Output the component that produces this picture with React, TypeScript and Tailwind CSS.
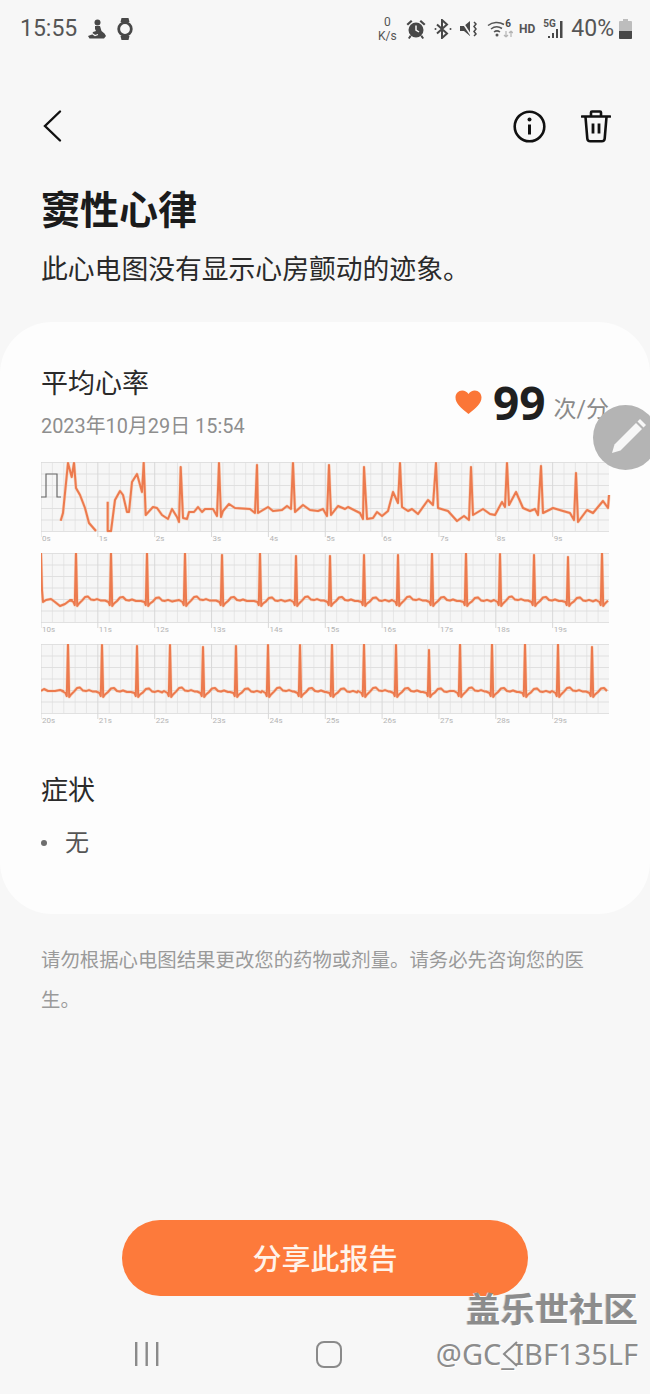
const GRID = 11.37;
const LEFT = 41;
const RIGHT = 609;

type Beat = [number, number];

// first strip is traced by hand, the first seconds are noisy
const strip1a = '60.7,520.7 63,513 68,463 71.7,477 74,463 76,488 80,495 85,508 89,523 96,531';
const strip1b =
  '107.7,501.7 107.7,531 111,531 115,500 120,491 123,495 127,512 129,512 132,482 137,474 142,492 143.7,462.7 145.7,515 153,507 157,508 162,515 168,519 172,509 177,517 179,522 180.7,467 183,518 187,519 189,512 194,512 198,507 202,512 205,509 213,509 217,516 219,463 221,517 223,511 229,504 235,508 250,509 255,513 257,465 258,513 268,507 273,511 282,510 287,506 291,509 293,463 295,512 303,505 310,510 318,511 323,509 327,516 329,465 331,515 338,506 345,509 348,507 360,513 363,519 364,467 367,519 373,518 377,512 382,516 388,511 393,492 398,503 400,463 402,507 408,511 412,509 418,514 428,500 433,505 436,463 438,508 448,511 457,521 464,516 469,520 471,467 473,515 483,509 490,514 495,515 502,502 505,507 507,463 509,505 516,492 523,508 530,511 535,509 538,515 541,466 543,513 553,508 563,511 570,513 574,520 576,473 578,522 587,510 593,513 603,501 608,508 609,495';

const beats2: Beat[] = [
  [76, 553], [111, 553], [147, 553], [185, 553], [222, 555], [260, 553], [296, 556], [330, 556], [364, 555],
  [398, 555], [432, 553], [466, 553], [500, 554], [534, 555], [568, 557], [602, 553],
];
const beats3: Beat[] = [
  [68, 644], [102, 645], [137, 646], [170, 645], [203, 647], [236, 646], [268, 645], [300, 645], [332, 644],
  [364, 644], [396, 645], [429, 650], [460, 644], [492, 644], [525, 644], [558, 644], [592, 647],
];

// builds one trace from beat positions: dip, spike, then the T wave
function tracePoints(beats: Beat[], base: number, start: string) {
  const pts: string[] = [start];
  beats.forEach(([x, peak], i) => {
    const next = beats[i + 1]?.[0] ?? RIGHT + 8;
    const wob = (i * 7) % 3;
    pts.push(`${x - 6},${base + wob * 0.5}`, `${x - 2.5},${base + 2}`, `${x - 1.2},${base + 5}`);
    pts.push(`${x},${peak}`, `${x + 1.2},${base + 6}`, `${x + 3},${base + 3.5}`);
    const tail: [number, number][] = [
      [6, 1], [9, -2.5], [12, -3], [15, 0], [18, 0.5], [21, -0.5], [25, 1],
    ];
    tail.forEach(([dx, dy]) => {
      if (x + dx < next - 6 && x + dx < RIGHT) pts.push(`${x + dx},${base + dy + (wob - 1) * 0.4}`);
    });
  });
  return pts.join(' ');
}

function Strip({ top, from, traces, pulse }: { top: number; from: number; traces: string[]; pulse?: string }) {
  const h = [...Array(7).keys()].map((i) => top + 0.5 + (i * 69) / 6);
  const v = [...Array(51).keys()].map((i) => LEFT + i * GRID);
  return (
    <svg width="570" height="84" viewBox={`41 ${top} 570 84`} className="block">
      <rect x={LEFT} y={top} width={RIGHT - LEFT} height="69" fill="#f6f6f6" />
      {v.map((x, i) =>
        i % 5 === 0 ? null : <line key={i} x1={x} x2={x} y1={top} y2={top + 69} stroke="#e2e2e2" strokeWidth="0.8" />
      )}
      {h.map((y) => (
        <line key={y} x1={LEFT} x2={RIGHT} y1={y} y2={y} stroke="#dedede" strokeWidth="0.9" />
      ))}
      {[...Array(10).keys()].map((i) => {
        const x = LEFT + i * GRID * 5;
        return (
          <g key={i}>
            <line x1={x} x2={x} y1={top} y2={top + 75} stroke="#d8d8d8" strokeWidth="1" />
            <text x={x + 1} y={top + 79} fontSize="8" fill="#b4b4b4" fontFamily="Roboto, sans-serif">
              {from + i}s
            </text>
          </g>
        );
      })}
      {pulse && <polyline points={pulse} fill="none" stroke="#6b6b6b" strokeWidth="1.2" />}
      {traces.map((p, i) => (
        <g key={i} fill="none" strokeLinejoin="round">
          <polyline points={p} stroke="#f9c3a4" strokeWidth="3.2" opacity="0.6" />
          <polyline points={p} stroke="#ec7a4e" strokeWidth="2" />
        </g>
      ))}
    </svg>
  );
}

function StatusLeft() {
  return (
    <div className="flex items-center gap-[11px]">
      <span className="pt-[1px] text-[23px] text-[#555]">15:55</span>
      <svg width="18" height="20" viewBox="0 0 18 20" fill="#484848">
        <circle cx="9.500" cy="3.500" r="3" />
        <path d="M7 7h5l1.500 5 3 2.500L18 17l-2 2.500H1.500L0 17l4-1.500 1-2.500 3-1-1-2z" />
        <path d="M4 14.500l3 2 3-1" stroke="#f7f7f7" strokeWidth="1.200" fill="none" />
      </svg>
      <svg width="16" height="24" viewBox="0 0 16 24" fill="none">
        <path d="M3.500 5L4.500 1h7l1 4M3.500 19l1 4h7l1-4" fill="#484848" />
        <circle cx="8" cy="12" r="6.300" stroke="#484848" strokeWidth="2.800" />
      </svg>
    </div>
  );
}

function StatusRight() {
  return (
    <div className="flex items-center">
      <div className="flex w-[20px] flex-col items-center text-[12px] leading-[14px] text-[#555]">
        <span>0</span>
        <span>K/s</span>
      </div>
      <svg className="ml-[9px]" width="20" height="20" viewBox="0 0 20 20" fill="#484848">
        <circle cx="10" cy="11" r="7.500" />
        <path d="M0.500 5L5 1l1.500 1.500L2 6.500zM19.500 5L15 1l-1.500 1.500L18 6.500zM4 16l-2 3 1.500 1 2-2.500zM16 16l2 3-1.500 1-2-2.500z" />
        <path d="M10 6.500V11l3 2" stroke="#f7f7f7" strokeWidth="1.500" fill="none" />
      </svg>
      <svg className="ml-[8px]" width="18" height="20" viewBox="0 0 18 20" fill="none" stroke="#484848" strokeWidth="2">
        <path d="M3 5.500l10 9-5 4.500V1l5 4.500-10 9" />
        <circle cx="1.500" cy="10" r="1" fill="#484848" stroke="none" />
        <circle cx="16.500" cy="10" r="1" fill="#484848" stroke="none" />
      </svg>
      <svg className="ml-[8px]" width="19" height="20" viewBox="0 0 19 20" fill="#484848">
        <path d="M0 7h4l6-5v15l-6-5H0z" />
        <path d="M1 1l11 17" stroke="#f7f7f7" strokeWidth="1.500" />
        <path d="M14 3l2 2-2 2.500 2 2.500-2 2.500 2 2.500-2 2" stroke="#484848" strokeWidth="1.500" fill="none" />
      </svg>
      <svg className="ml-[8px]" width="26" height="20" viewBox="0 0 26 20" fill="none">
        <path d="M1 6.500a14 14 0 0 1 16-1M4 10a9.500 9.500 0 0 1 11-.5M7 13a5 5 0 0 1 6 0" stroke="#555" strokeWidth="1.500" />
        <circle cx="10" cy="16" r="1.500" fill="#555" />
        <path d="M19 12v6m0 0l-2-2m2 2l2-2" stroke="#b5b5b5" strokeWidth="1.200" />
        <path d="M24 18v-6m0 0l-2 2m2-2l2 2" stroke="#b5b5b5" strokeWidth="1.200" />
      </svg>
      <span className="ml-[-8px] mt-[-10px] text-[10px] font-bold leading-none text-[#484848]">6</span>
      <span className="ml-[8px] text-[12px] font-bold text-[#555]">HD</span>
      <div className="relative ml-[8px] h-[20px] w-[23px]">
        <span className="absolute left-0 top-0 text-[10px] font-bold leading-none text-[#555]">5G</span>
        <svg className="absolute left-0 top-0" width="23" height="20" viewBox="0 0 23 20" fill="#484848">
          <rect x="5" y="17" width="2" height="2" />
          <rect x="9" y="14" width="2" height="5" />
          <rect x="13" y="10" width="2" height="9" />
          <rect x="17" y="2" width="2.500" height="17" />
        </svg>
      </div>
      <span className="ml-[5px] pt-[1px] text-[23px] text-[#555]">40%</span>
      <svg className="ml-[5px]" width="13" height="20" viewBox="0 0 13 20">
        <path d="M4 0h5v2h3a1 1 0 0 1 1 1v16a1 1 0 0 1-1 1H1a1 1 0 0 1-1-1V3a1 1 0 0 1 1-1h3z" fill="#bdbdbd" />
        <path d="M0 12h13v7a1 1 0 0 1-1 1H1a1 1 0 0 1-1-1z" fill="#484848" />
      </svg>
    </div>
  );
}

export default function App() {
  return (
    <div className="relative flex h-[1394px] w-[650px] flex-col overflow-hidden bg-[#f7f7f7] [font-family:Roboto,'Noto_Sans_CJK_SC',sans-serif]">
      <div className="flex h-[58px] items-center justify-between pl-[20px] pr-[18px]">
        <StatusLeft />
        <StatusRight />
      </div>

      <div className="mt-[42px] flex h-[52px] items-center justify-between pl-[40px] pr-[39px]">
        <svg width="24" height="36" viewBox="0 0 24 36" fill="none" stroke="#111" strokeWidth="2.400" strokeLinecap="round">
          <path d="M20 3.500L5 18l15 14.500" />
        </svg>
        <div className="flex items-center gap-[35px]">
          <svg width="33" height="33" viewBox="0 0 33 33" fill="none" stroke="#111" strokeWidth="2.600">
            <circle cx="16.500" cy="16.500" r="14.800" />
            <path d="M16.500 14.500v10" strokeWidth="3" />
            <circle cx="16.500" cy="9.500" r="2" fill="#111" stroke="none" />
          </svg>
          <svg width="30" height="33" viewBox="0 0 30 33" fill="none" stroke="#111" strokeWidth="2.600" strokeLinejoin="round">
            <path d="M1 6.500h28" strokeLinecap="round" />
            <path d="M10 6V2.500a1 1 0 0 1 1-1h8a1 1 0 0 1 1 1V6" />
            <path d="M4.500 7l1.800 21.500a3 3 0 0 0 3 2.800h11.400a3 3 0 0 0 3-2.800L25.500 7" />
            <path d="M12 13.500v10M18 13.500v10" strokeWidth="2.800" />
          </svg>
        </div>
      </div>

      <h1 className="mt-[34px] pl-[41px] text-[39px] font-bold leading-[50px] text-[#1b1b1b]">窦性心律</h1>
      <p className="mt-[14px] pl-[41px] text-[26.800px] leading-[40px] text-[#2a2a2a]">此心电图没有显示心房颤动的迹象。</p>

      <section className="mt-[32px] rounded-[52px] bg-[#fdfdfd] pb-[53px] pl-[41px] pt-[44px]">
        <div className="flex h-[96px] items-start justify-between pr-[41px]">
          <div>
            <div className="text-[27px] leading-[36px] text-[#2a2a2a]">平均心率</div>
            <div className="mt-[11px] text-[19.900px] leading-[28px] text-[#8e8e8e]">2023年10月29日 15:54</div>
          </div>
          <div className="mt-[7px] flex items-center">
            <svg width="27" height="25" viewBox="0 0 27 25" fill="#fb7637">
              <path d="M13.500 24C6 18 .5 13.500.5 7.500.5 3.500 3.500.5 7.200.5c2.600 0 4.800 1.200 6.300 3.600C15 1.700 17.200.5 19.800.5c3.700 0 6.700 3 6.700 7 0 6-5.500 10.500-13 16.500z" />
            </svg>
            <span className="ml-[11px] text-[46px] font-bold leading-[58px] text-[#1f1f1f] [font-family:'Noto_Sans',sans-serif]">99</span>
            <span className="ml-[8px] mt-[16px] text-[23px] leading-[30px] text-[#8a8a8a]">次/分</span>
          </div>
        </div>

        <div className="flex flex-col gap-[7px]">
          <Strip top={462} from={0} pulse="41,497 46,497 46,474 57,474 57,497 61,497" traces={[strip1a, strip1b]} />
          <Strip top={553} from={10} traces={[tracePoints(beats2, 600, '41,553 42,590 43,602 46,600 51,599 55,602 60,606 65,604 69,601 72,600')]} />
          <Strip top={644} from={20} traces={[tracePoints(beats3, 691, '41,691 44,689 48,691 55,691 60,690 63,691')]} />
        </div>

        <div className="mt-[45px] text-[27px] leading-[36px] text-[#2a2a2a]">症状</div>
        <div className="mt-[16px] flex items-center">
          <span className="h-[6px] w-[6px] rounded-full bg-[#6e6e6e]" />
          <span className="ml-[18px] text-[24px] leading-[36px] text-[#555]">无</span>
        </div>
      </section>

      <p className="mt-[27px] px-[41px] text-[19.400px] leading-[40px] text-[#9a9a9a]">
        请勿根据心电图结果更改您的药物或剂量。请务必先咨询您的医生。
      </p>

      <button className="mx-auto mt-auto flex h-[76px] w-[406px] items-center justify-center rounded-full bg-[#fd7a3b] pt-[5px] text-[29px] font-medium text-[#fff3ea]">
        分享此报告
      </button>

      <nav className="mt-[28px] flex h-[70px] items-start pl-[134px]">
        <svg className="mt-[18px]" width="26" height="24" viewBox="0 0 26 24" fill="#8a8a8a">
          <rect x="1" y="0" width="2.400" height="24" />
          <rect x="11.500" y="0" width="2.400" height="24" />
          <rect x="22" y="0" width="2.400" height="24" />
        </svg>
        <div className="ml-[156px] mt-[17px] h-[27px] w-[26px] rounded-[8px] border-[2.500px] border-[#8a8a8a]" />
      </nav>

      <div className="absolute left-[593px] top-[405px] h-[65px] w-[65px] rounded-full bg-[#b4b4b4]">
        <svg width="65" height="65" viewBox="0 0 65 65" fill="#f7f7f7">
          <path d="M19 48l2.500-8.500L43 18l6 6-21.500 21.500z" />
          <path d="M44.500 16.500l2.500-2.500 6 6-2.500 2.500z" />
        </svg>
      </div>

      <div className="pointer-events-none absolute right-[12px] top-[1289px] text-[34.400px] font-bold leading-[42px] text-[#8c8c8c] [text-shadow:1px_1px_0_#fff,-1px_0_0_#d0d0d0]">
        盖乐世社区
      </div>
      <div className="pointer-events-none absolute right-[12px] top-[1336px] text-[29px] leading-[36px] text-[#8c8c8c] [font-family:'Noto_Sans',sans-serif] [text-shadow:1px_1px_0_#fff]">
        @GC_IBF135LF
      </div>
      <svg className="pointer-events-none absolute left-[500px] top-[1340px]" width="20" height="28" viewBox="0 0 20 28" fill="none" stroke="#8a8a8a" strokeWidth="2">
        <path d="M17 2L4 14l13 12" />
      </svg>
    </div>
  );
}
